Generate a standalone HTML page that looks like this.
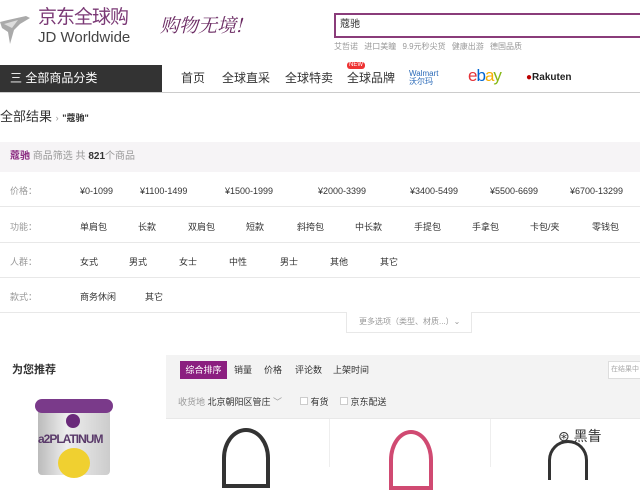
<!DOCTYPE html>
<html><head><meta charset="utf-8"><style>
*{margin:0;padding:0;box-sizing:border-box}
body{width:640px;height:467px;overflow:hidden;background:#fff;font-family:"Liberation Sans","Noto Sans CJK SC",sans-serif;color:#333;position:relative;line-height:1.2}
.a{position:absolute;white-space:nowrap}
.f9{font-size:9px}
.g{color:#999}
.line{position:absolute;left:0;width:640px;height:1px;background:#e8e8e8}
</style></head><body>
<svg class="a" style="left:0;top:10px" width="32" height="36" viewBox="0 0 32 36"><path d="M0 12 L8 10 L26 6 L30 8 L20 14 L14 20 L10 34 L8 22 L2 18Z" fill="#aaa"/><path d="M4 14 L18 10 L12 18Z" fill="#ddd"/></svg>
<div class="a" style="left:38px;top:7px;font-size:19px;line-height:22px;color:#7b3a76;letter-spacing:-1px">京东全球购</div>
<div class="a" style="left:38px;top:29px;font-size:15px;line-height:17px;color:#444">JD Worldwide</div>
<div class="a" style="left:160px;top:12px;font-size:19px;line-height:26px;color:#6a2a62;font-style:italic;font-family:'Noto Serif CJK SC',serif">购物无境!</div>
<div class="a" style="left:334px;top:13px;width:306px;height:25px;border:2px solid #8a3c7a;border-right:none"></div>
<div class="a" style="left:340px;top:19px;font-size:10px">蔻驰</div>
<div class="a g" style="left:334px;top:42px;font-size:8px;word-spacing:4px">艾哲诺 进口美瞳 9.9元秒尖货 健康出游 德国品质</div>
<div class="a" style="left:0;top:65px;width:162px;height:28px;background:#333"></div>
<div class="a" style="left:10px;top:71px;font-size:12px;color:#fff">三 全部商品分类</div>
<div class="line" style="top:92px;background:#ccc"></div>
<div class="a" style="left:181px;top:71px;font-size:12px">首页</div>
<div class="a" style="left:222px;top:71px;font-size:12px">全球直采</div>
<div class="a" style="left:285px;top:71px;font-size:12px">全球特卖</div>
<div class="a" style="left:347px;top:71px;font-size:12px">全球品牌</div>
<div class="a" style="left:347px;top:62px;font-size:6px;background:#e33;color:#fff;border-radius:3px;padding:0 2px">NEW</div>
<div class="a" style="left:409px;top:70px;font-size:8px;color:#2a6ab8;line-height:8px">Walmart<br>沃尔玛</div>
<div class="a" style="left:468px;top:66px;font-size:17px;letter-spacing:-1px"><span style="color:#e53238">e</span><span style="color:#0064d2">b</span><span style="color:#f5af02">a</span><span style="color:#86b817">y</span></div>
<div class="a" style="left:526px;top:72px;font-size:10px;font-weight:bold;color:#222"><span style="color:#b00">●</span>Rakuten</div>
<div class="a" style="left:0;top:109px;font-size:13px">全部结果 <span class="g" style="font-size:9px">›</span> <b style="font-size:9px">"蔻驰"</b></div>
<div class="a" style="left:0;top:142px;width:640px;height:30px;background:#f6f4f6"></div>
<div class="a" style="left:10px;top:151px;font-size:10px"><b style="color:#8a2a80">蔻驰</b> <span class="g">商品筛选 共</span> <b>821</b><span class="g">个商品</span></div>
<div class="a f9 g" style="left:10px;top:186px">价格：</div>
<div class="a f9" style="left:80px;top:186px">¥0-1099</div><div class="a f9" style="left:140px;top:186px">¥1100-1499</div><div class="a f9" style="left:225px;top:186px">¥1500-1999</div><div class="a f9" style="left:318px;top:186px">¥2000-3399</div><div class="a f9" style="left:410px;top:186px">¥3400-5499</div><div class="a f9" style="left:490px;top:186px">¥5500-6699</div><div class="a f9" style="left:570px;top:186px">¥6700-13299</div>
<div class="line" style="top:206px"></div>
<div class="a f9 g" style="left:10px;top:222px">功能：</div>
<div class="a f9" style="left:80px;top:222px">单肩包</div><div class="a f9" style="left:138px;top:222px">长款</div><div class="a f9" style="left:188px;top:222px">双肩包</div><div class="a f9" style="left:246px;top:222px">短款</div><div class="a f9" style="left:297px;top:222px">斜挎包</div><div class="a f9" style="left:355px;top:222px">中长款</div><div class="a f9" style="left:414px;top:222px">手提包</div><div class="a f9" style="left:472px;top:222px">手拿包</div><div class="a f9" style="left:530px;top:222px">卡包/夹</div><div class="a f9" style="left:592px;top:222px">零钱包</div>
<div class="line" style="top:242px"></div>
<div class="a f9 g" style="left:10px;top:257px">人群：</div>
<div class="a f9" style="left:80px;top:257px">女式</div><div class="a f9" style="left:129px;top:257px">男式</div><div class="a f9" style="left:179px;top:257px">女士</div><div class="a f9" style="left:229px;top:257px">中性</div><div class="a f9" style="left:280px;top:257px">男士</div><div class="a f9" style="left:330px;top:257px">其他</div><div class="a f9" style="left:380px;top:257px">其它</div>
<div class="line" style="top:277px"></div>
<div class="a f9 g" style="left:10px;top:292px">款式：</div>
<div class="a f9" style="left:80px;top:292px">商务休闲</div><div class="a f9" style="left:145px;top:292px">其它</div>
<div class="line" style="top:312px"></div>
<div class="a" style="left:346px;top:312px;width:126px;height:21px;border:1px solid #e8e8e8;border-top:none;background:#fff"></div>
<div class="a g" style="left:359px;top:317px;font-size:8px">更多选项（类型、材质...）⌄</div>
<div class="a" style="left:12px;top:364px;font-size:11px;font-weight:bold">为您推荐</div>
<div class="a" style="left:166px;top:355px;width:474px;height:63px;background:#f3f3f3"></div>
<div class="a" style="left:180px;top:361px;width:47px;height:18px;background:#8b1f80;color:#fff;font-size:9px;text-align:center;line-height:18px">综合排序</div>
<div class="a f9" style="left:234px;top:365px">销量</div><div class="a f9" style="left:264px;top:365px">价格</div><div class="a f9" style="left:295px;top:365px">评论数</div><div class="a f9" style="left:333px;top:365px">上架时间</div>
<div class="a" style="left:608px;top:361px;width:40px;height:18px;border:1px solid #ddd;background:#fff;font-size:7px;color:#aaa;padding:4px 2px">在结果中</div>
<div class="a f9" style="left:178px;top:397px"><span class="g">收货地</span> 北京朝阳区管庄 <span class="g">﹀</span></div>
<div class="a f9" style="left:300px;top:397px"><span style="display:inline-block;width:8px;height:8px;border:1px solid #ccc;background:#fff"></span> 有货</div>
<div class="a f9" style="left:340px;top:397px"><span style="display:inline-block;width:8px;height:8px;border:1px solid #ccc;background:#fff"></span> 京东配送</div>
<div class="a" style="left:329px;top:418px;width:1px;height:49px;background:#eee"></div>
<div class="a" style="left:490px;top:418px;width:1px;height:49px;background:#eee"></div>
<div class="a" style="left:166px;top:418px;width:474px;height:1px;background:#e8e8e8"></div>
<div class="a" style="left:222px;top:428px;width:48px;height:60px;border:4px solid #333;border-radius:50% 50% 0 0"></div>
<div class="a" style="left:389px;top:430px;width:44px;height:60px;border:4px solid #d04a72;border-radius:50% 50% 0 0"></div>
<div class="a" style="left:548px;top:440px;width:40px;height:40px;border:3px solid #333;border-bottom:none;border-radius:50% 50% 0 0"></div>
<div class="a" style="left:38px;top:405px;width:72px;height:70px;background:linear-gradient(90deg,#bbb,#eee 40%,#ccc);border-radius:4px"></div>
<div class="a" style="left:35px;top:399px;width:78px;height:14px;background:#7a3a8a;border-radius:8px"></div>
<div class="a" style="left:66px;top:414px;width:14px;height:14px;background:#6a2a7a;border-radius:50%"></div>
<div class="a" style="left:38px;top:432px;font-size:12px;font-weight:bold;color:#5a3a6a;letter-spacing:-1px">a2PLATINUM</div>
<div class="a" style="left:58px;top:448px;width:32px;height:30px;background:#f0d030;border-radius:50%"></div>
<div class="a" style="left:558px;top:428px;font-size:14px;color:#333">⊛ 黑眚</div>
</body></html>
